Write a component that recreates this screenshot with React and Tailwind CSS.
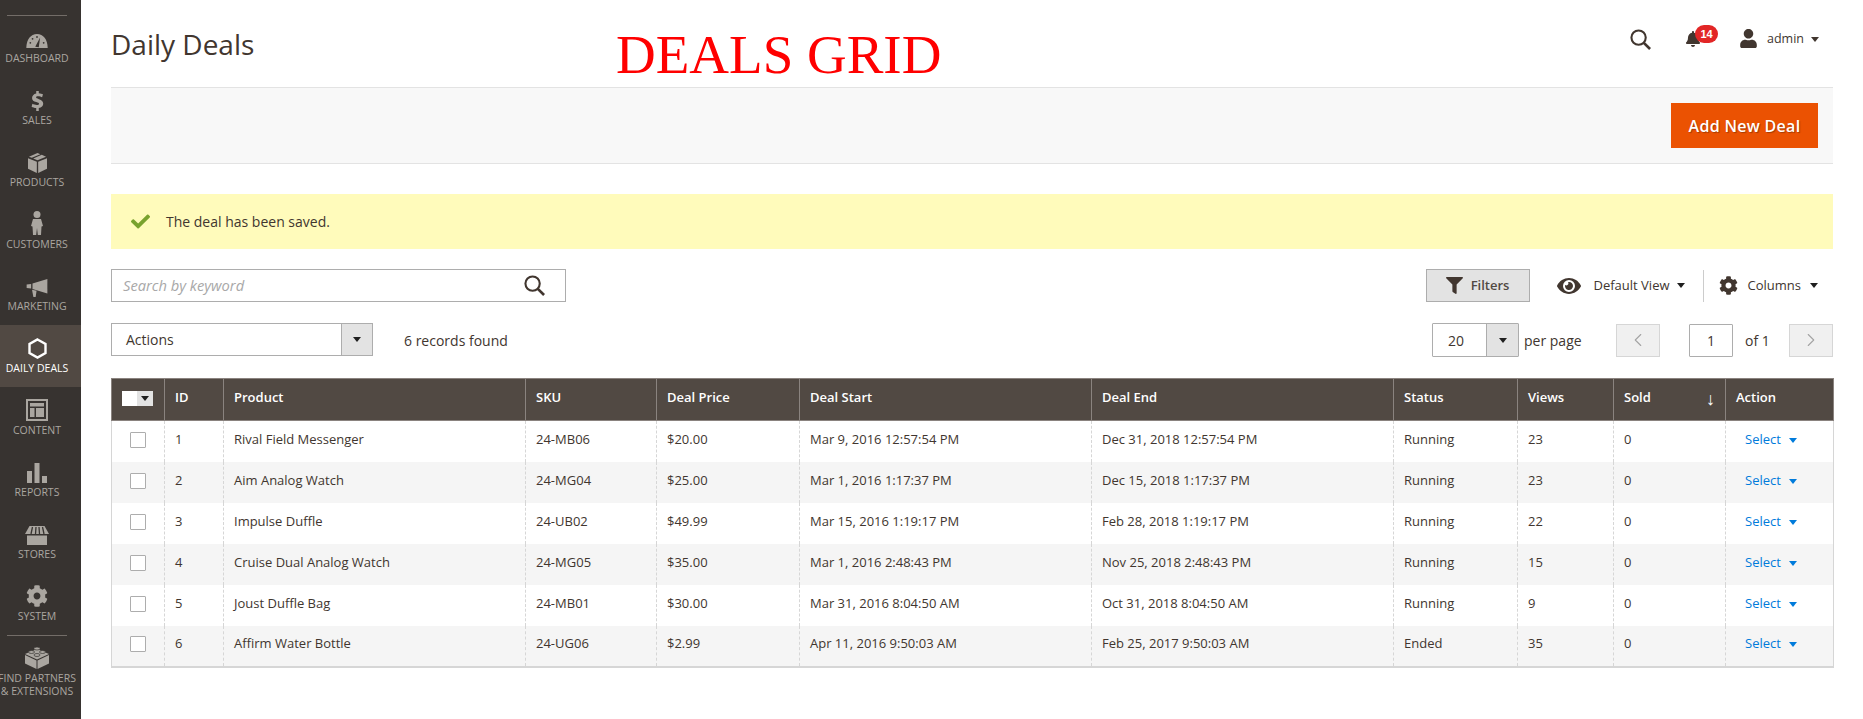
import React from 'react';
import { FaBell, FaCheck, FaCog, FaEye, FaFilter, FaUser } from 'react-icons/fa';
import { ChevronLeft, ChevronRight } from 'lucide-react';

const ICON = '#aaa6a0';

// Sidebar icons
const DashboardIcon = () => (
  <svg width="22" height="16" viewBox="0 0 24 18">
    <path d="M0 17C0 7 5 1 12 1s12 6 12 16z" fill={ICON} />
    <path d="M10 15.500l5.500-10.500 -1.500 11z" fill="#373330" />
    <circle cx="4.500" cy="11" r="1" fill="#373330" />
    <circle cx="7" cy="6.500" r="1" fill="#373330" />
    <circle cx="12" cy="4.500" r="1" fill="#373330" />
    <circle cx="19.500" cy="11" r="1" fill="#373330" />
  </svg>
);
const SalesIcon = () => (
  <svg width="13" height="20" viewBox="0 0 14 22">
    <path
      d="M5.600 0h2.800v2.400c1.900.2 3.500.7 4.600 1.300l-.9 3.200c-1.100-.5-2.800-1.100-4.500-1.100-1.500 0-2.200.5-2.200 1.200 0 .8 1 1.200 3.200 2 3 1 4.700 2.300 4.700 4.900 0 2.500-1.800 4.300-4.900 4.800V22H5.600v-3.200c-2-.1-3.900-.7-5.100-1.400l.9-3.300c1.200.7 3.100 1.300 4.800 1.300 1.600 0 2.500-.6 2.500-1.400 0-.9-.9-1.300-3-2C2.700 11.500 1 10.200 1 7.700c0-2.500 1.800-4.400 4.600-5z"
      fill={ICON}
    />
  </svg>
);
const ProductsIcon = () => (
  <svg width="19" height="20" viewBox="0 0 20 21">
    <path d="M0 5.500l9.300 3.800V21L0 16.500z" fill={ICON} />
    <path d="M20 5.500l-9.300 3.800V21L20 16.500z" fill={ICON} />
    <path d="M10 0l3 1.200-9 3.800 -3-1.200z" fill={ICON} />
    <path d="M14.500 1.800L19 3.800l-9 3.900-4.500-1.900z" fill={ICON} />
  </svg>
);
const CustomersIcon = () => (
  <svg width="12" height="24" viewBox="0 0 12 24">
    <circle cx="6" cy="3.500" r="3.500" fill={ICON} />
    <path d="M2 8h8l2 7-1.500.5L10 24H6.800L6 17l-.8 7H2l-.5-8.500L0 15z" fill={ICON} />
  </svg>
);
const MarketingIcon = () => (
  <svg width="22" height="18" viewBox="0 0 23 20">
    <path d="M0 6l5-.5v5L0 10z" fill={ICON} />
    <path d="M6.500 5L23 0v16L6.500 11z" fill={ICON} />
    <path d="M6 12l5 1-1 7H7.500z" fill={ICON} />
  </svg>
);
const DealsIcon = () => (
  <svg width="19" height="21" viewBox="0 0 19 21">
    <path d="M9.500 1.500L17.500 6v9l-8 4.500-8-4.500V6z" fill="none" stroke="#ffffff" strokeWidth="2.400" />
  </svg>
);
const ContentIcon = () => (
  <svg width="22" height="22" viewBox="0 0 22 22">
    <path fillRule="evenodd" d="M0 0h22v22H0zM2 2v18h18V2z" fill={ICON} />
    <path d="M4 4h14v3.500H4zM4 9h4.500v9H4zM10 9h8v9h-8z" fill={ICON} />
  </svg>
);
const ReportsIcon = () => (
  <svg width="20" height="20" viewBox="0 0 20 20">
    <path d="M0 8h5v12H0zM7.500 0h5v20h-5zM15 13h5v7h-5z" fill={ICON} />
  </svg>
);
const StoresIcon = () => (
  <svg width="24" height="19" viewBox="0 0 24 19">
    <path d="M4.500 0h15L24 8H0z" fill={ICON} />
    <path d="M7.500 1L6 8M11 1l-.5 7M14 1l.5 7M17.500 1L19 8" stroke="#373330" strokeWidth="1.300" />
    <path d="M2 9.500h20V19H2z" fill={ICON} />
  </svg>
);
const PartnersIcon = () => (
  <svg width="24" height="23" viewBox="0 0 24 23">
    <path d="M0 9l11.500 5.500V23L0 17.500z" fill={ICON} />
    <path d="M24 9l-11.500 5.500V23L24 17.500z" fill={ICON} />
    <path d="M12 3L24 8l-12 5.500L0 8z" fill={ICON} />
    <ellipse cx="12" cy="2.500" rx="3" ry="1.500" fill={ICON} stroke="#373330" strokeWidth=".7" />
    <ellipse cx="6.500" cy="6" rx="3" ry="1.500" fill={ICON} stroke="#373330" strokeWidth=".7" />
    <ellipse cx="17.500" cy="6" rx="3" ry="1.500" fill={ICON} stroke="#373330" strokeWidth=".7" />
    <ellipse cx="12" cy="9" rx="3" ry="1.500" fill={ICON} stroke="#373330" strokeWidth=".7" />
  </svg>
);

const SearchGlyph = ({ size }) => (
  <svg width={size} height={size} viewBox="0 0 22 22" fill="none" stroke="#41362f" strokeWidth="2.200">
    <circle cx="9" cy="9" r="7.500" />
    <path d="M14.500 14.500L21 21" strokeWidth="2.800" />
  </svg>
);

const Caret = ({ className }) => (
  <span className={`inline-block w-0 h-0 border-x-[4px] border-x-transparent border-t-[5px] ${className}`} />
);

const menu = [
  { label: 'Dashboard', icon: <DashboardIcon /> },
  { label: 'Sales', icon: <SalesIcon /> },
  { label: 'Products', icon: <ProductsIcon /> },
  { label: 'Customers', icon: <CustomersIcon /> },
  { label: 'Marketing', icon: <MarketingIcon /> },
  { label: 'Daily Deals', icon: <DealsIcon />, active: true },
  { label: 'Content', icon: <ContentIcon /> },
  { label: 'Reports', icon: <ReportsIcon /> },
  { label: 'Stores', icon: <StoresIcon /> },
  { label: 'System', icon: <FaCog size={22} color={ICON} /> },
];

const deals = [
  [1, 'Rival Field Messenger', '24-MB06', '$20.00', 'Mar 9, 2016 12:57:54 PM', 'Dec 31, 2018 12:57:54 PM', 'Running', 23],
  [2, 'Aim Analog Watch', '24-MG04', '$25.00', 'Mar 1, 2016 1:17:37 PM', 'Dec 15, 2018 1:17:37 PM', 'Running', 23],
  [3, 'Impulse Duffle', '24-UB02', '$49.99', 'Mar 15, 2016 1:19:17 PM', 'Feb 28, 2018 1:19:17 PM', 'Running', 22],
  [4, 'Cruise Dual Analog Watch', '24-MG05', '$35.00', 'Mar 1, 2016 2:48:43 PM', 'Nov 25, 2018 2:48:43 PM', 'Running', 15],
  [5, 'Joust Duffle Bag', '24-MB01', '$30.00', 'Mar 31, 2016 8:04:50 AM', 'Oct 31, 2018 8:04:50 AM', 'Running', 9],
  [6, 'Affirm Water Bottle', '24-UG06', '$2.99', 'Apr 11, 2016 9:50:03 AM', 'Feb 25, 2017 9:50:03 AM', 'Ended', 35],
];

const columns = ['ID', 'Product', 'SKU', 'Deal Price', 'Deal Start', 'Deal End', 'Status', 'Views', 'Sold', 'Action'];
const widths = [53, 59, 302, 131, 143, 292, 302, 124, 96, 112, 108];

const Sidebar = () => (
  <aside className="w-[81px] shrink-0 bg-[#373330] pt-[15px]">
    <div className="ml-[7px] w-[60px] -mb-px border-t border-[#736d68]" />
    {menu.map((item) => (
      <div
        key={item.label}
        className={`h-[62px] pr-[7px] flex flex-col items-center ${item.active ? 'bg-[#514943] text-white' : 'text-[#aaa6a0]'}`}
      >
        <div className="h-[34px] flex items-end justify-center">{item.icon}</div>
        <div className="mt-[2px] text-[10.500px] leading-[14px] uppercase whitespace-nowrap">{item.label}</div>
      </div>
    ))}
    <div className="ml-[7px] w-[60px] -mb-px border-t border-[#736d68]" />
    <div className="flex flex-col items-center text-[#aaa6a0] pr-[7px] pt-[11px]">
      <PartnersIcon />
      <div className="text-[10.500px] leading-[13px] uppercase text-center whitespace-nowrap mt-[3px]">
        Find Partners
        <br />& Extensions
      </div>
    </div>
  </aside>
);

const Header = () => (
  <div className="h-[87px] flex items-start">
    <h1 className="text-[28px] leading-[38px] mt-[25px] font-normal text-[#41362f] w-[505px]">Daily Deals</h1>
    <div className="font-['Liberation_Serif',serif] text-[55px] leading-[62px] mt-6 text-[#ff0000] whitespace-nowrap">DEALS GRID</div>
    <div className="ml-auto flex items-center h-[24px] mt-[27px] mr-[14px] text-[#41362f]">
      <SearchGlyph size={21} />
      <div className="relative ml-[34px] mr-[38px]">
        <FaBell size={16} />
        <span className="absolute -top-[6px] left-[10px] h-[18px] w-[23px] rounded-full bg-[#e22626] text-white text-[11px] font-bold flex items-center justify-center font-['Liberation_Sans',sans-serif]">
          14
        </span>
      </div>
      <FaUser size={19} className="-mt-[2px]" />
      <span className="ml-[9px] text-[12.500px] text-[#41362f]">admin</span>
      <Caret className="border-t-[#41362f] ml-[7px]" />
    </div>
  </div>
);

const Toolbar = () => (
  <div className="h-[77px] bg-[#f8f8f8] border-y border-[#e3e3e3] flex items-center justify-end pr-[15px]">
    <button className="w-[147px] h-[45px] bg-[#eb5202] text-white text-[16px] tracking-[0.3px] font-semibold [text-shadow:1px_1px_1px_rgba(0,0,0,0.3)]">
      Add New Deal
    </button>
  </div>
);

const Message = () => (
  <div className="mt-[30px] h-[55px] bg-[#fffbbb] flex items-center pl-[20px] text-[14px] text-[#41362f]">
    <FaCheck size={19} color="#79a22e" />
    <span className="ml-[16px]">The deal has been saved.</span>
  </div>
);

const SearchRow = () => (
  <div className="mt-5 h-[33px] flex items-center">
    <div className="w-[455px] h-[33px] border border-[#adadad] flex items-center pl-[11px] pr-[20px] justify-between">
      <span className="text-[14.700px] italic text-[#a8a8a8]">Search by keyword</span>
      <SearchGlyph size={21} />
    </div>
    <div className="ml-auto flex items-center text-[#41362f] text-[13px] pr-[15px]">
      <div className="w-[104px] h-[33px] bg-[#e3e3e3] border border-[#adadad] flex items-center justify-center font-semibold text-[#514943]">
        <FaFilter size={17} color="#41362f" />
        <span className="ml-[8px]">Filters</span>
      </div>
      <FaEye size={24} color="#41362f" className="ml-[27px]" />
      <span className="ml-[13px]">Default View</span>
      <Caret className="border-t-[#1f1f1f] ml-[7px]" />
      <div className="h-[32px] border-l border-[#cccccc] ml-[18px]" />
      <FaCog size={19} color="#41362f" className="ml-[15px]" />
      <span className="ml-[10px]">Columns</span>
      <Caret className="border-t-[#1f1f1f] ml-[9px]" />
    </div>
  </div>
);

const PagerRow = () => (
  <div className="mt-[21px] h-[34px] flex items-center text-[14px] text-[#41362f]">
    <div className="w-[262px] h-[33px] border border-[#adadad] flex items-center self-start">
      <span className="flex-1 pl-[14px]">Actions</span>
      <span className="w-[31px] h-full bg-[#e3e3e3] border-l border-[#adadad] flex items-center justify-center">
        <Caret className="border-t-[#1f1f1f]" />
      </span>
    </div>
    <span className="ml-[31px]">6 records found</span>
    <div className="ml-auto flex items-center">
      <div className="w-[87px] h-[34px] border border-[#adadad] rounded-[1px] flex items-center">
        <span className="flex-1 pl-[15px]">20</span>
        <span className="w-[32px] h-full bg-[#e3e3e3] border-l border-[#adadad] flex items-center justify-center">
          <Caret className="border-t-[#1f1f1f]" />
        </span>
      </div>
      <span className="ml-[5px] w-[92px]">per page</span>
      <div className="w-[44px] h-[33px] bg-[#f0f0f0] border border-[#d6d6d6] flex items-center justify-center">
        <ChevronLeft size={22} strokeWidth={1.2} color="#a3a3a3" />
      </div>
      <div className="ml-[29px] w-[44px] h-[33px] border border-[#adadad] rounded-[1px] flex items-center justify-center">1</div>
      <span className="ml-[12px] w-[44px]">of 1</span>
      <div className="w-[44px] h-[33px] bg-[#f0f0f0] border border-[#d6d6d6] flex items-center justify-center">
        <ChevronRight size={22} strokeWidth={1.2} color="#a3a3a3" />
      </div>
    </div>
  </div>
);

const DealsTable = () => (
  <table className="mt-[21px] w-[1722px] table-fixed border-collapse text-[13px] text-[#41362f]">
    <colgroup>
      {widths.map((w, i) => (
        <col key={i} style={{ width: w }} />
      ))}
    </colgroup>
    <thead>
      <tr className="h-[42px] bg-[#514943] text-white">
        <th className="border border-[#8a837f] pl-[10px] pb-[3px] text-left">
          <div className="w-[31px] h-[15px] flex bg-[#e3e3e3]">
            <span className="w-[15px] h-full bg-white" />
            <span className="flex-1 flex items-center justify-center">
              <Caret className="border-t-[#1f1f1f]" />
            </span>
          </div>
        </th>
        {columns.map((c) => (
          <th key={c} className="border border-[#8a837f] px-[10px] pb-[3px] text-left font-semibold">
            <div className="flex justify-between items-center">
              {c}
              {c === 'Sold' && <span className="font-normal text-[18px] leading-[18px]">↓</span>}
            </div>
          </th>
        ))}
      </tr>
    </thead>
    <tbody>
      {deals.map((row, i) => (
        <tr key={row[0]} className={`h-[41px] ${i % 2 ? 'bg-[#f5f5f5]' : 'bg-white'}`}>
          <td className="border-l border-[#d6d6d6] pl-[18px] pb-[3px]">
            <div className="w-4 h-4 bg-white border border-[#adadad] rounded-[1px]" />
          </td>
          {row.map((v, j) => (
            <td key={j} className="border-l border-dashed border-[#d6d6d6] px-[10px] pb-[3px] whitespace-nowrap">
              {v}
            </td>
          ))}
          <td className="border-l border-dashed border-[#d6d6d6] px-[10px] pb-[3px]">0</td>
          <td className="border-l border-dashed border-[#d6d6d6] pl-[19px] pb-[3px] relative">
            <span className="text-[#007bdb]">Select</span>
            <Caret className="border-t-[#007bdb] ml-[8px] align-middle" />
            <span className="absolute top-0 right-0 bottom-0 w-px bg-[#d6d6d6]" />
          </td>
        </tr>
      ))}
      <tr className="h-0">
        <td colSpan={11} className="border-t-2 border-[#d6d6d6] p-0" />
      </tr>
    </tbody>
  </table>
);

export default function App() {
  return (
    <div className="flex min-h-[719px] bg-white font-['Open_Sans',sans-serif]">
      <Sidebar />
      <main className="flex-1 min-w-0 pl-[30px] pr-[30px]">
        <Header />
        <Toolbar />
        <Message />
        <SearchRow />
        <PagerRow />
        <DealsTable />
      </main>
    </div>
  );
}
